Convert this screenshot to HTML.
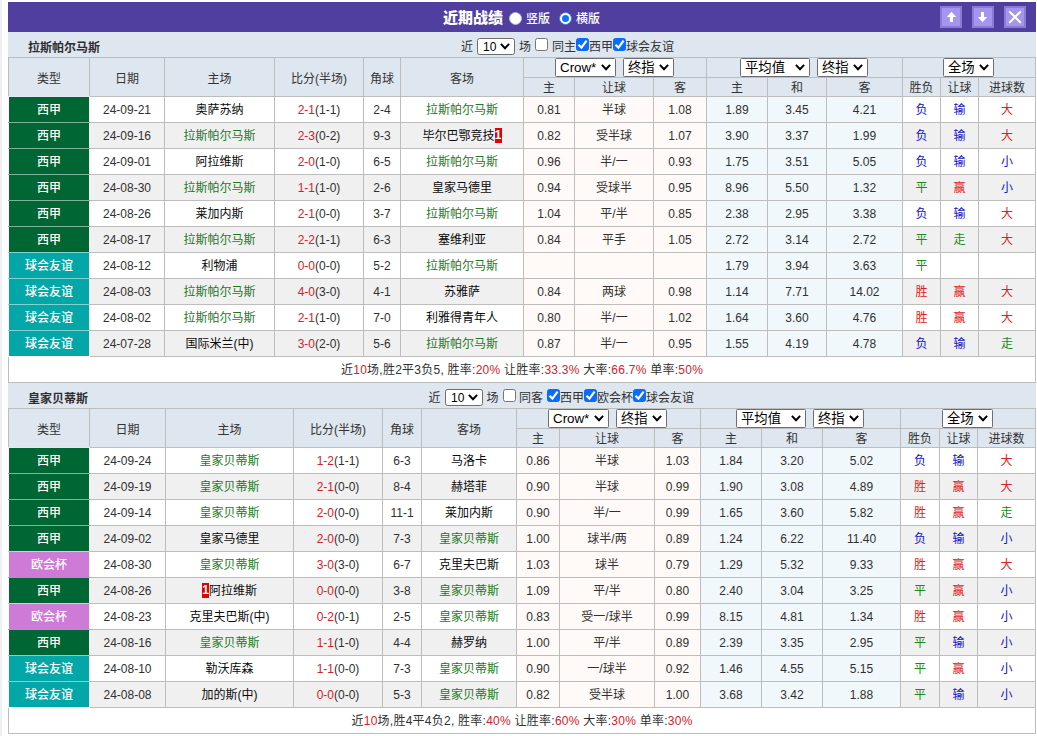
<!DOCTYPE html>
<html lang="zh-CN">
<head>
<meta charset="utf-8">
<title>近期战绩</title>
<style>
html,body{margin:0;padding:0;background:#fff;}
body{width:1037px;height:736px;overflow:hidden;position:relative;font-family:"Liberation Sans","Noto Sans CJK SC",sans-serif;font-size:12px;color:#333;}
.edge{position:absolute;left:0;top:0;width:2px;height:736px;background:#eef0f4;}
#wrap{position:absolute;left:8px;top:2px;width:1028px;}
.bar{height:30px;background:#503f9e;position:relative;color:#fff;}
.bar .ttl{position:absolute;left:435px;top:1px;line-height:30px;font-size:15px;font-weight:900;}
.bar .rd{position:absolute;top:10px;width:13px;height:13px;border-radius:50%;background:#fff;box-sizing:border-box;border:1px solid #b9b3d8;}
.bar .rd.on{border:1px solid #3f6fe6;}
.bar .rd.on:after{content:'';position:absolute;left:2px;top:2px;width:7px;height:7px;border-radius:50%;background:#0a75ff;}
.bar .rl{position:absolute;top:2px;line-height:30px;font-size:12px;font-weight:500;}
.bar .btn{position:absolute;top:4px;width:22px;height:22px;background:#a595ed;border:2px solid #8b7bd8;box-sizing:border-box;}
.bar .btn svg{position:absolute;left:-2px;top:-2px;}
.th{height:25px;background:#dee6ef;position:relative;}
.th .tn{position:absolute;left:20px;top:3px;line-height:26px;font-size:12px;color:#2e2e2e;}
.th .flt{position:absolute;left:0;top:0;width:100%;height:26px;font-size:12px;color:#333}
.ft{position:absolute;top:2px;line-height:26px;white-space:nowrap;}
table{border-collapse:collapse;table-layout:fixed;width:1027px;}
th,td{border:1px solid #bdbdbd;padding:0;text-align:center;font-weight:normal;overflow:hidden;white-space:nowrap;}
tr.h1 th,tr.h2 th{background:#dee6ef;color:#333;}
tr.h1{height:20px;} tr.h2{height:19px;}
tr.h1 th{padding-top:0;}
tr.h2 th{line-height:16px;padding-top:2px;}
td{height:23px;line-height:23px;padding-top:2px;background:#fff;color:#303030;}
tr.alt td{background:#f0f0f0;}
td.ah,tr.alt td.ah{background:#fffaf7;}
td.eu,tr.alt td.eu{background:#f1f8fc;}
td.lg,tr.alt td.lg{color:#fff;font-weight:500;border-left-color:#fff;border-right-color:#fff;}
tr.alt td.lg{border-right-color:#f7f7f7;}
th.lgh{border-bottom-color:#e2ebf0;}
.lg1,tr.alt td.lg1{background:#006633;}
.lg2,tr.alt td.lg2{background:#04a7a7;}
.lg3,tr.alt td.lg3{background:#cd7bd7;}
.tm{color:#1b7a1b;}
.nm{color:#0a0a0a;}
.r{color:#d4202c;}
td.r{color:#e02020;} td.b{color:#1010c8;} td.g{color:#1b8a1b;}
.rc{background:#e60000;color:#fff;display:inline-block;line-height:15px;height:15px;width:7px;font-weight:bold;text-align:center;position:relative;top:-1px;}
tr.sm td{background:#fff;letter-spacing:0.25px;}
.sel{display:inline-block;box-sizing:border-box;height:19px;border:1px solid #6e6e6e;border-radius:1.5px;background:#fff;vertical-align:top;position:relative;text-align:left;font-size:13.33px;line-height:17px;color:#000;}
.sel .st{position:absolute;left:4px;top:0;}
.sel .cv{position:absolute;right:4px;top:5px;}
.sc .sel .cv{top:5px;}
.sel.s10{position:absolute;top:6px;height:17px;font-size:12px;line-height:15px;}
.sel.s10 .cv{top:4px;}
.sel.s10 .st{left:5px;top:1px;}
.sel.s10{border-radius:2.5px;}
.gp{display:inline-block;width:7px;}
th.sc{line-height:0;font-size:0;vertical-align:top;padding:0;text-align:left;}
.t1 th.ahg{padding-left:31px;}.t1 th.eug{padding-left:33px;}.t1 th.rsg{padding-left:40px;}
.t2 th.ahg{padding-left:31px;}.t2 th.eug{padding-left:35px;}.t2 th.rsg{padding-left:41px;}
.cb{position:absolute;top:6px;width:13px;height:13px;box-sizing:border-box;border:1px solid #767676;border-radius:2.5px;background:#fff;}
.cb.on{background:#0a6cff;border-color:#0a6cff;}
.cb svg{position:absolute;left:-1px;top:-1px;}
</style>
</head>
<body>
<div class="edge"></div>
<div id="wrap">
<div class="bar"><span class="ttl">近期战绩</span>
<span class="rd" style="left:501px"></span><span class="rl" style="left:518px">竖版</span>
<span class="rd on" style="left:551px"></span><span class="rl" style="left:568px">横版</span>
<span class="btn" style="left:932px"><svg width="22" height="22" viewBox="0 0 22 22"><path d="M11.45 5.7 L16.2 11.1 H13 V16.1 H9.9 V11.1 H6.7 Z" fill="#fff"/></svg></span><span class="btn" style="left:964px"><svg width="22" height="22" viewBox="0 0 22 22"><path d="M10.5 16.3 L15.2 11.1 H12 V5.9 H8.9 V11.1 H5.8 Z" fill="#fff"/></svg></span><span class="btn" style="left:996px"><svg width="22" height="22" viewBox="0 0 22 22"><path d="M5.9 5.9 L16.2 16.2 M16.2 5.9 L5.9 16.2" stroke="#fff" stroke-width="2.1" stroke-linecap="round" fill="none"/></svg></span>
</div>
<div class="th th1"><b class="tn">拉斯帕尔马斯</b><div class="flt"><span class="ft" style="left:453px">近</span><span class="sel s10" style="left:469px;width:38px"><span class="st">10</span><svg class="cv" width="10" height="7" viewBox="0 0 10 7"><path d="M0.9 0.9 L5 5.3 L9.1 0.9" fill="none" stroke="#000" stroke-width="2"/></svg></span><span class="ft" style="left:511px">场</span><span style="left:527px" class="cb"></span><span class="ft" style="left:544px">同主</span><span style="left:568px" class="cb on"><svg width="13" height="13" viewBox="0 0 13 13"><path d="M2.5 6.8 L5.4 9.6 L10.6 2.7" fill="none" stroke="#fff" stroke-width="2.2"/></svg></span><span class="ft" style="left:581px">西甲</span><span style="left:605px" class="cb on"><svg width="13" height="13" viewBox="0 0 13 13"><path d="M2.5 6.8 L5.4 9.6 L10.6 2.7" fill="none" stroke="#fff" stroke-width="2.2"/></svg></span><span class="ft" style="left:618px">球会友谊</span></div></div>
<table class="t1">
<colgroup><col style="width:81px"><col style="width:75px"><col style="width:110px"><col style="width:89px"><col style="width:37px"><col style="width:123px"><col style="width:51px"><col style="width:79px"><col style="width:53px"><col style="width:61px"><col style="width:59px"><col style="width:76px"><col style="width:38px"><col style="width:38px"><col style="width:57px"></colgroup>
<tr class="h1"><th rowspan="2" class="lgh">类型</th><th rowspan="2">日期</th><th rowspan="2">主场</th><th rowspan="2">比分(半场)</th><th rowspan="2">角球</th><th rowspan="2">客场</th><th colspan="3" class="sc ahg"><span class="sel " style="width:61px"><span class="st">Crow*</span><svg class="cv" width="10" height="7" viewBox="0 0 10 7"><path d="M0.9 0.9 L5 5.3 L9.1 0.9" fill="none" stroke="#000" stroke-width="2"/></svg></span><span class="gp"></span><span class="sel " style="width:51px"><span class="st">终指</span><svg class="cv" width="10" height="7" viewBox="0 0 10 7"><path d="M0.9 0.9 L5 5.3 L9.1 0.9" fill="none" stroke="#000" stroke-width="2"/></svg></span></th><th colspan="3" class="sc eug"><span class="sel w2" style="width:70px"><span class="st">平均值</span><svg class="cv" width="10" height="7" viewBox="0 0 10 7"><path d="M0.9 0.9 L5 5.3 L9.1 0.9" fill="none" stroke="#000" stroke-width="2"/></svg></span><span class="gp"></span><span class="sel " style="width:51px"><span class="st">终指</span><svg class="cv" width="10" height="7" viewBox="0 0 10 7"><path d="M0.9 0.9 L5 5.3 L9.1 0.9" fill="none" stroke="#000" stroke-width="2"/></svg></span></th><th colspan="3" class="sc rsg"><span class="sel " style="width:51px"><span class="st">全场</span><svg class="cv" width="10" height="7" viewBox="0 0 10 7"><path d="M0.9 0.9 L5 5.3 L9.1 0.9" fill="none" stroke="#000" stroke-width="2"/></svg></span></th></tr>
<tr class="h2"><th>主</th><th>让球</th><th>客</th><th>主</th><th>和</th><th>客</th><th>胜负</th><th>让球</th><th>进球数</th></tr>
<tr><td class="lg lg1" style="border-bottom-color:#7fb299">西甲</td><td>24-09-21</td><td><span class="nm">奥萨苏纳</span></td><td><span class="r">2-1</span>(1-1)</td><td>2-4</td><td><span class="tm">拉斯帕尔马斯</span></td><td class="ah">0.81</td><td class="ah">半球</td><td class="ah">1.08</td><td class="eu">1.89</td><td class="eu">3.45</td><td class="eu">4.21</td><td class="b">负</td><td class="b">输</td><td class="r">大</td></tr>
<tr class="alt"><td class="lg lg1" style="border-bottom-color:#7fb299">西甲</td><td>24-09-16</td><td><span class="tm">拉斯帕尔马斯</span></td><td><span class="r">2-3</span>(0-2)</td><td>9-3</td><td><span class="nm">毕尔巴鄂竞技</span><span class="rc">1</span></td><td class="ah">0.82</td><td class="ah">受半球</td><td class="ah">1.07</td><td class="eu">3.90</td><td class="eu">3.37</td><td class="eu">1.99</td><td class="b">负</td><td class="b">输</td><td class="r">大</td></tr>
<tr><td class="lg lg1" style="border-bottom-color:#7fb299">西甲</td><td>24-09-01</td><td><span class="nm">阿拉维斯</span></td><td><span class="r">2-0</span>(1-0)</td><td>6-5</td><td><span class="tm">拉斯帕尔马斯</span></td><td class="ah">0.96</td><td class="ah">半/一</td><td class="ah">0.93</td><td class="eu">1.75</td><td class="eu">3.51</td><td class="eu">5.05</td><td class="b">负</td><td class="b">输</td><td class="b">小</td></tr>
<tr class="alt"><td class="lg lg1" style="border-bottom-color:#7fb299">西甲</td><td>24-08-30</td><td><span class="tm">拉斯帕尔马斯</span></td><td><span class="r">1-1</span>(1-0)</td><td>2-6</td><td><span class="nm">皇家马德里</span></td><td class="ah">0.94</td><td class="ah">受球半</td><td class="ah">0.95</td><td class="eu">8.96</td><td class="eu">5.50</td><td class="eu">1.32</td><td class="g">平</td><td class="r">赢</td><td class="b">小</td></tr>
<tr><td class="lg lg1" style="border-bottom-color:#7fb299">西甲</td><td>24-08-26</td><td><span class="nm">莱加内斯</span></td><td><span class="r">2-1</span>(0-0)</td><td>3-7</td><td><span class="tm">拉斯帕尔马斯</span></td><td class="ah">1.04</td><td class="ah">平/半</td><td class="ah">0.85</td><td class="eu">2.38</td><td class="eu">2.95</td><td class="eu">3.38</td><td class="b">负</td><td class="b">输</td><td class="r">大</td></tr>
<tr class="alt"><td class="lg lg1" style="border-bottom-color:#81d3d3">西甲</td><td>24-08-17</td><td><span class="tm">拉斯帕尔马斯</span></td><td><span class="r">2-2</span>(1-1)</td><td>6-3</td><td><span class="nm">塞维利亚</span></td><td class="ah">0.84</td><td class="ah">平手</td><td class="ah">1.05</td><td class="eu">2.72</td><td class="eu">3.14</td><td class="eu">2.72</td><td class="g">平</td><td class="g">走</td><td class="r">大</td></tr>
<tr><td class="lg lg2" style="border-bottom-color:#81d3d3">球会友谊</td><td>24-08-12</td><td><span class="nm">利物浦</span></td><td><span class="r">0-0</span>(0-0)</td><td>5-2</td><td><span class="tm">拉斯帕尔马斯</span></td><td class="ah"></td><td class="ah"></td><td class="ah"></td><td class="eu">1.79</td><td class="eu">3.94</td><td class="eu">3.63</td><td class="g">平</td><td></td><td></td></tr>
<tr class="alt"><td class="lg lg2" style="border-bottom-color:#81d3d3">球会友谊</td><td>24-08-03</td><td><span class="tm">拉斯帕尔马斯</span></td><td><span class="r">4-0</span>(3-0)</td><td>4-1</td><td><span class="nm">苏雅萨</span></td><td class="ah">0.84</td><td class="ah">两球</td><td class="ah">0.98</td><td class="eu">1.14</td><td class="eu">7.71</td><td class="eu">14.02</td><td class="r">胜</td><td class="r">赢</td><td class="r">大</td></tr>
<tr><td class="lg lg2" style="border-bottom-color:#81d3d3">球会友谊</td><td>24-08-02</td><td><span class="tm">拉斯帕尔马斯</span></td><td><span class="r">2-1</span>(1-0)</td><td>7-0</td><td><span class="nm">利雅得青年人</span></td><td class="ah">0.80</td><td class="ah">半/一</td><td class="ah">1.02</td><td class="eu">1.64</td><td class="eu">3.60</td><td class="eu">4.76</td><td class="r">胜</td><td class="r">赢</td><td class="r">大</td></tr>
<tr class="alt"><td class="lg lg2" style="border-bottom-color:#fff">球会友谊</td><td>24-07-28</td><td><span class="nm">国际米兰(中)</span></td><td><span class="r">3-0</span>(2-0)</td><td>5-6</td><td><span class="tm">拉斯帕尔马斯</span></td><td class="ah">0.87</td><td class="ah">半/一</td><td class="ah">0.95</td><td class="eu">1.55</td><td class="eu">4.19</td><td class="eu">4.78</td><td class="b">负</td><td class="b">输</td><td class="g">走</td></tr>
<tr class="sm"><td colspan="15">近<span class="r">10</span>场,胜2平3负5, 胜率:<span class="r">20%</span> 让胜率:<span class="r">33.3%</span> 大率:<span class="r">66.7%</span> 单率:<span class="r">50%</span></td></tr>
</table>
<div class="th th2"><b class="tn">皇家贝蒂斯</b><div class="flt"><span class="ft" style="left:420.5px">近</span><span class="sel s10" style="left:437px;width:38px"><span class="st">10</span><svg class="cv" width="10" height="7" viewBox="0 0 10 7"><path d="M0.9 0.9 L5 5.3 L9.1 0.9" fill="none" stroke="#000" stroke-width="2"/></svg></span><span class="ft" style="left:478.5px">场</span><span style="left:495px" class="cb"></span><span class="ft" style="left:511px">同客</span><span style="left:539px" class="cb on"><svg width="13" height="13" viewBox="0 0 13 13"><path d="M2.5 6.8 L5.4 9.6 L10.6 2.7" fill="none" stroke="#fff" stroke-width="2.2"/></svg></span><span class="ft" style="left:552px">西甲</span><span style="left:576px" class="cb on"><svg width="13" height="13" viewBox="0 0 13 13"><path d="M2.5 6.8 L5.4 9.6 L10.6 2.7" fill="none" stroke="#fff" stroke-width="2.2"/></svg></span><span class="ft" style="left:589px">欧会杯</span><span style="left:625px" class="cb on"><svg width="13" height="13" viewBox="0 0 13 13"><path d="M2.5 6.8 L5.4 9.6 L10.6 2.7" fill="none" stroke="#fff" stroke-width="2.2"/></svg></span><span class="ft" style="left:638px">球会友谊</span></div></div>
<table class="t2">
<colgroup><col style="width:81px"><col style="width:76px"><col style="width:128px"><col style="width:89px"><col style="width:39px"><col style="width:95px"><col style="width:43px"><col style="width:95px"><col style="width:46px"><col style="width:61px"><col style="width:61px"><col style="width:78px"><col style="width:39px"><col style="width:38px"><col style="width:58px"></colgroup>
<tr class="h1"><th rowspan="2" class="lgh">类型</th><th rowspan="2">日期</th><th rowspan="2">主场</th><th rowspan="2">比分(半场)</th><th rowspan="2">角球</th><th rowspan="2">客场</th><th colspan="3" class="sc ahg"><span class="sel " style="width:61px"><span class="st">Crow*</span><svg class="cv" width="10" height="7" viewBox="0 0 10 7"><path d="M0.9 0.9 L5 5.3 L9.1 0.9" fill="none" stroke="#000" stroke-width="2"/></svg></span><span class="gp"></span><span class="sel " style="width:51px"><span class="st">终指</span><svg class="cv" width="10" height="7" viewBox="0 0 10 7"><path d="M0.9 0.9 L5 5.3 L9.1 0.9" fill="none" stroke="#000" stroke-width="2"/></svg></span></th><th colspan="3" class="sc eug"><span class="sel w2" style="width:70px"><span class="st">平均值</span><svg class="cv" width="10" height="7" viewBox="0 0 10 7"><path d="M0.9 0.9 L5 5.3 L9.1 0.9" fill="none" stroke="#000" stroke-width="2"/></svg></span><span class="gp"></span><span class="sel " style="width:51px"><span class="st">终指</span><svg class="cv" width="10" height="7" viewBox="0 0 10 7"><path d="M0.9 0.9 L5 5.3 L9.1 0.9" fill="none" stroke="#000" stroke-width="2"/></svg></span></th><th colspan="3" class="sc rsg"><span class="sel " style="width:51px"><span class="st">全场</span><svg class="cv" width="10" height="7" viewBox="0 0 10 7"><path d="M0.9 0.9 L5 5.3 L9.1 0.9" fill="none" stroke="#000" stroke-width="2"/></svg></span></th></tr>
<tr class="h2"><th>主</th><th>让球</th><th>客</th><th>主</th><th>和</th><th>客</th><th>胜负</th><th>让球</th><th>进球数</th></tr>
<tr><td class="lg lg1" style="border-bottom-color:#7fb299">西甲</td><td>24-09-24</td><td><span class="tm">皇家贝蒂斯</span></td><td><span class="r">1-2</span>(1-1)</td><td>6-3</td><td><span class="nm">马洛卡</span></td><td class="ah">0.86</td><td class="ah">半球</td><td class="ah">1.03</td><td class="eu">1.84</td><td class="eu">3.20</td><td class="eu">5.02</td><td class="b">负</td><td class="b">输</td><td class="r">大</td></tr>
<tr class="alt"><td class="lg lg1" style="border-bottom-color:#7fb299">西甲</td><td>24-09-19</td><td><span class="tm">皇家贝蒂斯</span></td><td><span class="r">2-1</span>(0-0)</td><td>8-4</td><td><span class="nm">赫塔菲</span></td><td class="ah">0.90</td><td class="ah">半球</td><td class="ah">0.99</td><td class="eu">1.90</td><td class="eu">3.08</td><td class="eu">4.89</td><td class="r">胜</td><td class="r">赢</td><td class="r">大</td></tr>
<tr><td class="lg lg1" style="border-bottom-color:#7fb299">西甲</td><td>24-09-14</td><td><span class="tm">皇家贝蒂斯</span></td><td><span class="r">2-0</span>(0-0)</td><td>11-1</td><td><span class="nm">莱加内斯</span></td><td class="ah">0.90</td><td class="ah">半/一</td><td class="ah">0.99</td><td class="eu">1.65</td><td class="eu">3.60</td><td class="eu">5.82</td><td class="r">胜</td><td class="r">赢</td><td class="g">走</td></tr>
<tr class="alt"><td class="lg lg1" style="border-bottom-color:#e6bdeb">西甲</td><td>24-09-02</td><td><span class="nm">皇家马德里</span></td><td><span class="r">2-0</span>(0-0)</td><td>7-3</td><td><span class="tm">皇家贝蒂斯</span></td><td class="ah">1.00</td><td class="ah">球半/两</td><td class="ah">0.89</td><td class="eu">1.24</td><td class="eu">6.22</td><td class="eu">11.40</td><td class="b">负</td><td class="b">输</td><td class="b">小</td></tr>
<tr><td class="lg lg3" style="border-bottom-color:#7fb299">欧会杯</td><td>24-08-30</td><td><span class="tm">皇家贝蒂斯</span></td><td><span class="r">3-0</span>(3-0)</td><td>6-7</td><td><span class="nm">克里夫巴斯</span></td><td class="ah">1.03</td><td class="ah">球半</td><td class="ah">0.79</td><td class="eu">1.29</td><td class="eu">5.32</td><td class="eu">9.33</td><td class="r">胜</td><td class="r">赢</td><td class="r">大</td></tr>
<tr class="alt"><td class="lg lg1" style="border-bottom-color:#e6bdeb">西甲</td><td>24-08-26</td><td><span class="rc">1</span><span class="nm">阿拉维斯</span></td><td><span class="r">0-0</span>(0-0)</td><td>3-8</td><td><span class="tm">皇家贝蒂斯</span></td><td class="ah">1.09</td><td class="ah">平/半</td><td class="ah">0.80</td><td class="eu">2.40</td><td class="eu">3.04</td><td class="eu">3.25</td><td class="g">平</td><td class="r">赢</td><td class="b">小</td></tr>
<tr><td class="lg lg3" style="border-bottom-color:#7fb299">欧会杯</td><td>24-08-23</td><td><span class="nm">克里夫巴斯(中)</span></td><td><span class="r">0-2</span>(0-1)</td><td>2-5</td><td><span class="tm">皇家贝蒂斯</span></td><td class="ah">0.83</td><td class="ah">受一/球半</td><td class="ah">0.99</td><td class="eu">8.15</td><td class="eu">4.81</td><td class="eu">1.34</td><td class="r">胜</td><td class="r">赢</td><td class="b">小</td></tr>
<tr class="alt"><td class="lg lg1" style="border-bottom-color:#81d3d3">西甲</td><td>24-08-16</td><td><span class="tm">皇家贝蒂斯</span></td><td><span class="r">1-1</span>(1-0)</td><td>4-4</td><td><span class="nm">赫罗纳</span></td><td class="ah">1.00</td><td class="ah">平/半</td><td class="ah">0.89</td><td class="eu">2.39</td><td class="eu">3.35</td><td class="eu">2.95</td><td class="g">平</td><td class="b">输</td><td class="b">小</td></tr>
<tr><td class="lg lg2" style="border-bottom-color:#81d3d3">球会友谊</td><td>24-08-10</td><td><span class="nm">勒沃库森</span></td><td><span class="r">1-1</span>(0-0)</td><td>7-3</td><td><span class="tm">皇家贝蒂斯</span></td><td class="ah">0.90</td><td class="ah">一/球半</td><td class="ah">0.92</td><td class="eu">1.46</td><td class="eu">4.55</td><td class="eu">5.15</td><td class="g">平</td><td class="r">赢</td><td class="b">小</td></tr>
<tr class="alt"><td class="lg lg2" style="border-bottom-color:#fff">球会友谊</td><td>24-08-08</td><td><span class="nm">加的斯(中)</span></td><td><span class="r">0-0</span>(0-0)</td><td>5-3</td><td><span class="tm">皇家贝蒂斯</span></td><td class="ah">0.82</td><td class="ah">受半球</td><td class="ah">1.00</td><td class="eu">3.68</td><td class="eu">3.42</td><td class="eu">1.88</td><td class="g">平</td><td class="b">输</td><td class="b">小</td></tr>
<tr class="sm"><td colspan="15">近<span class="r">10</span>场,胜4平4负2, 胜率:<span class="r">40%</span> 让胜率:<span class="r">60%</span> 大率:<span class="r">30%</span> 单率:<span class="r">30%</span></td></tr>
</table>
</div>
</body>
</html>
